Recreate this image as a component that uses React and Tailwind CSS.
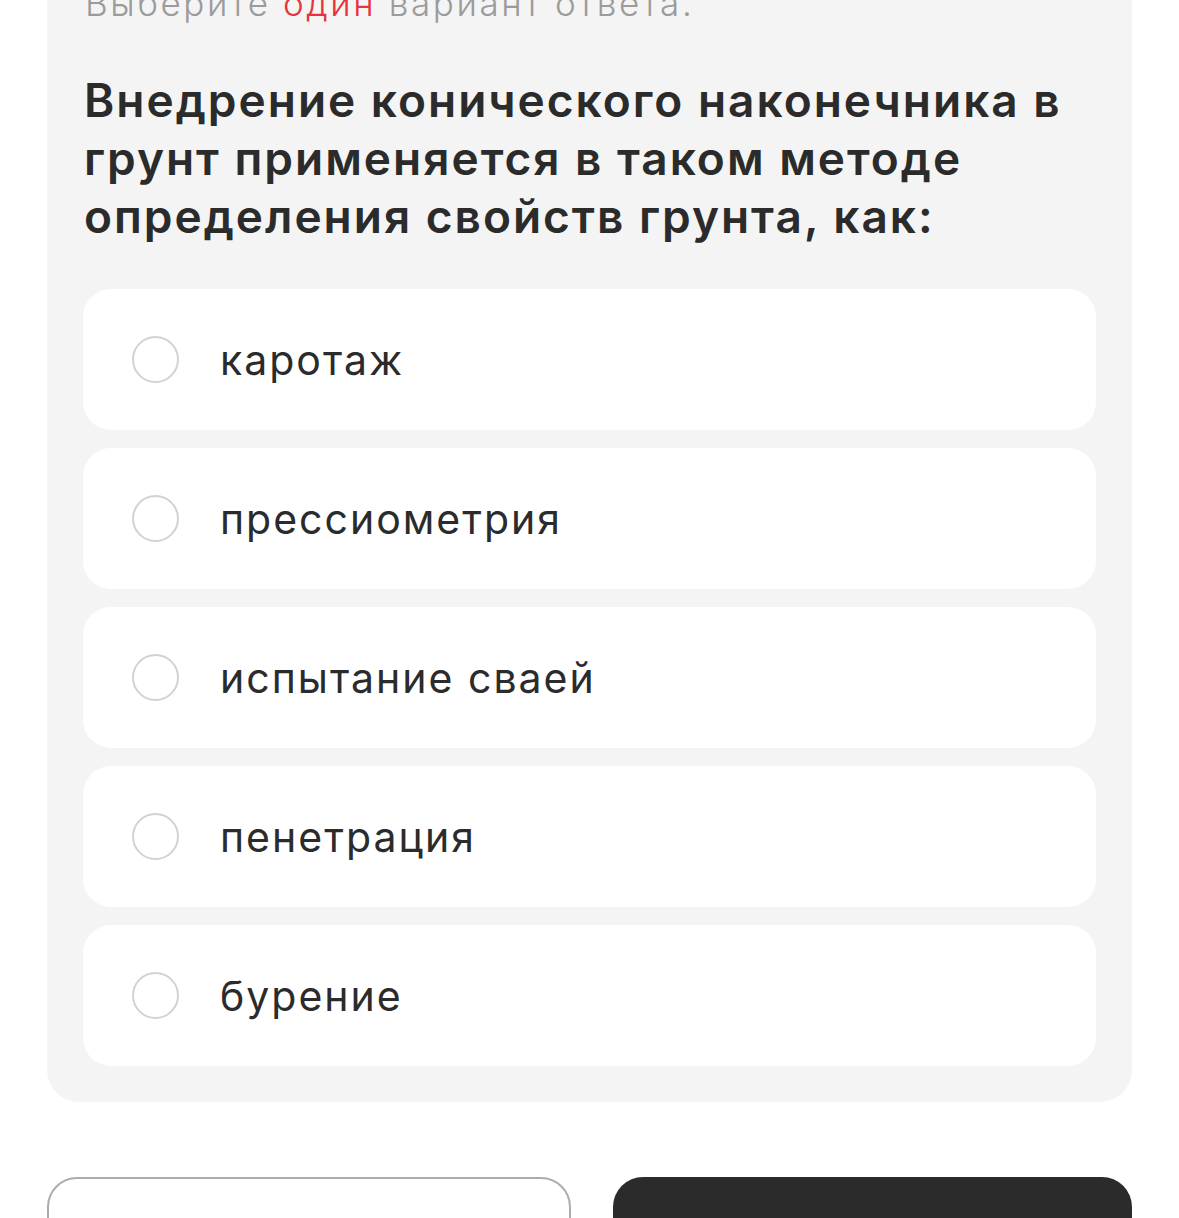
import React, { useState } from 'react';

const options = ['каротаж', 'прессиометрия', 'испытание сваей', 'пенетрация', 'бурение'];

const App = () => {
  const [selected, setSelected] = useState(null);

  return (
    <div className="min-h-[1218px] bg-white overflow-hidden px-[47px]" style={{ fontFamily: 'Inter, "Noto Sans", sans-serif' }}>
      {/* Question card */}
      <div className="-mt-[40px] rounded-[32px] bg-[#f4f4f4] px-[36px] pt-[23px] pb-[36px]">
        <p className="text-[35px] leading-[40px] tracking-[2.6px] text-[#9b9b9b] pl-[2px] font-light">
          Выберите <span className="text-[#e8323c]">один</span> вариант ответа.
        </p>
        <h1 className="mt-[48px] pl-[1px] text-[46px] font-semibold leading-[58px] tracking-[2px] text-[#2b2b2b]">
          Внедрение конического наконечника в грунт применяется в таком методе определения свойств грунта, как:
        </h1>

        <div className="mt-[44px] flex flex-col gap-[18px]">
          {options.map((option, index) => (
            <button
              key={index}
              onClick={() => setSelected(index)}
              className="flex h-[141px] items-center gap-[41px] rounded-[28px] bg-white pl-[49px] text-left"
            >
              <span className="flex h-[47px] w-[47px] shrink-0 items-center justify-center rounded-full border-2 border-[#d2d2d6]">
                {selected === index && <span className="h-[23px] w-[23px] rounded-full bg-[#2b2b2b]" />}
              </span>
              <span className="text-[41px] leading-[48px] tracking-[2px] text-[#2b2b2b]">{option}</span>
            </button>
          ))}
        </div>
      </div>

      {/* Bottom buttons */}
      <div className="mt-[75px] flex gap-[42px]">
        <button className="h-[120px] w-[524px] rounded-[30px] border-2 border-[#acacac] bg-white" />
        <button className="h-[120px] flex-1 rounded-[30px] bg-[#2b2b2b]" />
      </div>
    </div>
  );
};

export default App;
